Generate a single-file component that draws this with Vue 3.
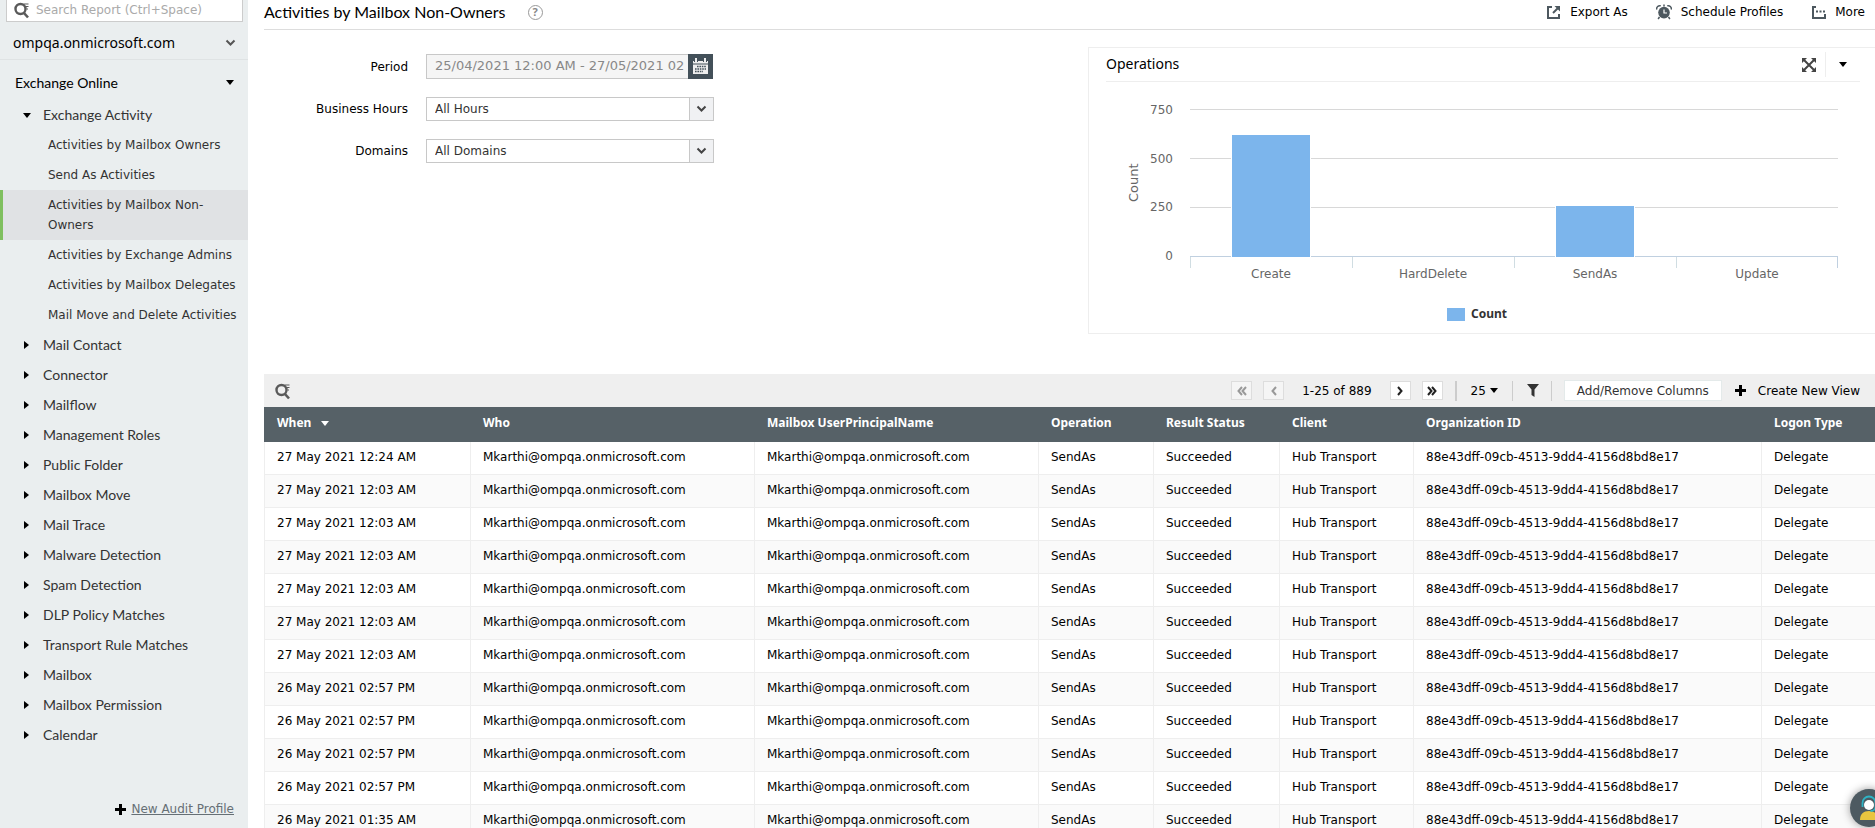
<script setup>
import { ref } from 'vue'

const reports = [
  'Activities by Mailbox Owners',
  'Send As Activities',
  'Activities by Mailbox Non-Owners',
  'Activities by Exchange Admins',
  'Activities by Mailbox Delegates',
  'Mail Move and Delete Activities'
]
const activeReport = 'Activities by Mailbox Non-Owners'

const groups = [
  'Mail Contact', 'Connector', 'Mailflow', 'Management Roles', 'Public Folder',
  'Mailbox Move', 'Mail Trace', 'Malware Detection', 'Spam Detection',
  'DLP Policy Matches', 'Transport Rule Matches', 'Mailbox',
  'Mailbox Permission', 'Calendar'
]

const period = ref('25/04/2021 12:00 AM - 27/05/2021 02')

const maxCount = 750
const yTicks = [750, 500, 250, 0]
const bars = [
  { name: 'Create', count: 618 },
  { name: 'HardDelete', count: 0 },
  { name: 'SendAs', count: 256 },
  { name: 'Update', count: 0 }
]

const columns = ['Who', 'Mailbox UserPrincipalName', 'Operation', 'Result Status', 'Client', 'Organization ID', 'Logon Type']
const times = [
  '27 May 2021 12:24 AM',
  ...Array(6).fill('27 May 2021 12:03 AM'),
  ...Array(4).fill('26 May 2021 02:57 PM'),
  '26 May 2021 01:35 AM'
]
const user = 'Mkarthi@ompqa.onmicrosoft.com'
const values = [user, user, 'SendAs', 'Succeeded', 'Hub Transport', '88e43dff-09cb-4513-9dd4-4156d8bd8e17', 'Delegate']
</script>

<template>
  <div class="page">
    <aside class="sidebar">
      <label class="search">
        <svg width="18" height="18" viewBox="0 0 18 18" fill="none" stroke="#5a5a5a">
          <circle cx="7.500" cy="8" r="5" stroke-width="2.400" />
          <path d="M11 12l4 4.500" stroke-width="2.600" />
          <path d="M10.500 3h5M12.500 5.500h3M13.500 8h1.500" stroke-width="1.200" />
        </svg>
        <input type="text" placeholder="Search Report (Ctrl+Space)" aria-label="Search Report" />
      </label>
      <button class="tenant">
        <span>ompqa.onmicrosoft.com</span>
        <svg width="11" height="8" viewBox="0 0 11 8"><path d="M1.500 1.500l4 4 4-4" fill="none" stroke="#555" stroke-width="2" /></svg>
      </button>
      <nav>
        <button class="section">
          <span>Exchange Online</span><i class="caret down"></i>
        </button>
        <button class="group open"><i class="caret down"></i><span>Exchange Activity</span></button>
        <a v-for="r in reports" :key="r" href="#" class="report" :class="{ active: r === activeReport }">{{ r }}</a>
        <button v-for="g in groups" :key="g" class="group"><i class="caret right"></i><span>{{ g }}</span></button>
      </nav>
      <div class="new-profile">
        <svg width="11" height="11" viewBox="0 0 11 11"><path d="M4 0h3v4h4v3H7v4H4V7H0V4h4z" /></svg>
        <a href="#">New Audit Profile</a>
      </div>
    </aside>

    <main class="main">
      <header class="top">
        <h1>Activities by Mailbox Non-Owners</h1>
        <button class="help" aria-label="Help">?</button>
        <div class="actions">
          <button>
            <svg width="15" height="15" viewBox="0 0 15 15" fill="none" stroke="#4d585f" stroke-width="2"><path d="M6 2H2v11h11V9" /><path d="M7 8l5-5" /><path d="M8.500 1H14v5.500z" fill="#4d585f" stroke="none" /></svg>
            Export As
          </button>
          <button>
            <svg width="16" height="16" viewBox="0 0 16 16"><circle cx="8" cy="8.600" r="5.800" fill="#4d585f" /><path d="M3.500 13l-1.400 2M12.500 13l1.400 2M.8 5.500a3 3 0 0 1 4-3.600M15.200 5.500a3 3 0 0 0-4-3.600M8 .5v2" fill="none" stroke="#4d585f" stroke-width="1.500" /><path d="M8 5.500V9h3" fill="none" stroke="#fff" stroke-width="1.200" /></svg>
            Schedule Profiles
          </button>
          <button>
            <svg width="15" height="15" viewBox="0 0 15 15" fill="none" stroke="#4d585f"><path d="M5 2H2v11h12V9" stroke-width="2" /><path d="M5 6.500h10" stroke-width="2" stroke-dasharray="2 1.500" /></svg>
            More
          </button>
        </div>
      </header>

      <section class="summary">
        <form class="filters">
          <label for="period">Period</label>
          <div class="period">
            <input id="period" v-model="period" type="text" readonly />
            <button type="button" aria-label="Pick dates">
              <svg width="17" height="17" viewBox="0 0 17 17"><path d="M1 3h15v13H1z" fill="#eee" /><path d="M1 6h15" stroke="#435059" /><path d="M4 0v4M13 0v4" stroke="#435059" stroke-width="4" /><path d="M4 0v4M13 0v4" stroke="#eee" stroke-width="2" /><path d="M5 8.500h9M3 11h11M3 13.500h8" stroke="#435059" stroke-width="1.500" stroke-dasharray="1.600 .8" /></svg>
            </button>
          </div>
          <label for="hours">Business Hours</label>
          <div class="drop">
            <select id="hours"><option>All Hours</option></select>
            <span><svg width="11" height="8" viewBox="0 0 11 8"><path d="M1.500 1.500l4 4 4-4" fill="none" stroke="#444" stroke-width="2" /></svg></span>
          </div>
          <label for="domains">Domains</label>
          <div class="drop">
            <select id="domains"><option>All Domains</option></select>
            <span><svg width="11" height="8" viewBox="0 0 11 8"><path d="M1.500 1.500l4 4 4-4" fill="none" stroke="#444" stroke-width="2" /></svg></span>
          </div>
        </form>

        <section class="card">
          <div class="card-head">
            <h2>Operations</h2>
            <button class="expand" aria-label="Expand">
              <svg width="14" height="14" viewBox="0 0 14 14" fill="#444"><path d="M2 2l10 10M12 2L2 12" stroke="#444" stroke-width="2" /><path d="M0 0h5L0 5zM14 0v5L9 0zM0 14V9l5 5zM14 14H9l5-5z" /></svg>
            </button>
            <button class="card-menu" aria-label="Chart menu"><i class="caret down"></i></button>
          </div>
          <div class="chart">
            <div class="axis-title">Count</div>
            <div class="y-axis"><span v-for="t in yTicks" :key="t">{{ t }}</span></div>
            <div class="plot">
              <div class="lines"><i></i><i></i><i></i></div>
              <div class="bars">
                <div v-for="b in bars" :key="b.name">
                  <i v-if="b.count" :style="{ height: (b.count / maxCount) * 100 + '%' }"></i>
                </div>
              </div>
            </div>
            <div class="x-axis"><span v-for="b in bars" :key="b.name">{{ b.name }}</span></div>
            <div class="legend"><i></i>Count</div>
          </div>
        </section>
      </section>

      <section class="results">
        <div class="toolbar">
          <button class="find" aria-label="Search">
            <svg width="18" height="18" viewBox="0 0 18 18" fill="none" stroke="#5a5a5a">
              <circle cx="7.500" cy="8" r="5" stroke-width="2.400" />
              <path d="M11 12l4 4.500" stroke-width="2.600" />
              <path d="M10.500 3h5M12.500 5.500h3M13.500 8h1.500" stroke-width="1.200" />
            </svg>
          </button>
          <button class="pg off" aria-label="First page"><svg width="10" height="10" viewBox="0 0 10 10"><path d="M5 1L1.500 5 5 9M9 1L5.500 5 9 9" /></svg></button>
          <button class="pg off" aria-label="Previous page"><svg width="10" height="10" viewBox="0 0 10 10"><path d="M7 1L3.500 5 7 9" /></svg></button>
          <span class="range">1-25 of 889</span>
          <button class="pg" aria-label="Next page"><svg width="10" height="10" viewBox="0 0 10 10"><path d="M3 1l3.500 4L3 9" /></svg></button>
          <button class="pg" aria-label="Last page"><svg width="10" height="10" viewBox="0 0 10 10"><path d="M1 1l3.500 4L1 9M5 1l3.500 4L5 9" /></svg></button>
          <i class="rule wide"></i>
          <button class="size">25<i class="caret down"></i></button>
          <i class="rule"></i>
          <button class="funnel" aria-label="Filter"><svg width="12" height="13" viewBox="0 0 12 13"><path d="M0 0h12L7.500 5.500V13L4.500 11V5.500z" fill="#333" /></svg></button>
          <i class="rule"></i>
          <button class="cols">Add/Remove Columns</button>
          <button class="create"><svg width="11" height="11" viewBox="0 0 11 11"><path d="M4 0h3v4h4v3H7v4H4V7H0V4h4z" /></svg>Create New View</button>
        </div>
        <table>
          <colgroup><col class="c1" /><col class="c2" /><col class="c2" /><col class="c3" /><col class="c4" /><col class="c5" /><col class="c6" /><col class="c7" /></colgroup>
          <thead>
            <tr>
              <th>When<i class="caret down"></i></th>
              <th v-for="c in columns" :key="c">{{ c }}</th>
            </tr>
          </thead>
          <tbody>
            <tr v-for="(t, n) in times" :key="n">
              <td>{{ t }}</td>
              <td v-for="(v, k) in values" :key="k">{{ v }}</td>
            </tr>
          </tbody>
        </table>
      </section>
    </main>

    <button class="support" aria-label="Support">
      <svg width="38" height="38" viewBox="0 0 38 38">
        <path d="M10 31c0-6 3.500-9 9-9s9 3 9 9z" fill="#e9c53f" />
        <circle cx="19" cy="16" r="5" fill="#fff" />
        <path d="M12.500 18v-4a6.500 6.500 0 0 1 13 0v4c0 2-2 4-5 4" fill="none" stroke="#2fb3c4" stroke-width="1.800" />
      </svg>
    </button>
  </div>
</template>

<style>
html, body { margin: 0; overflow: hidden; }
</style>

<style scoped>
* { box-sizing: border-box; }
.page {
  display: flex;
  height: 100vh;
  overflow: hidden;
  background: #fff;
  color: #000;
  font: 12px/20px "DejaVu Sans", sans-serif;
}
button {
  margin: 0;
  padding: 0;
  border: 0;
  background: none;
  color: inherit;
  font: inherit;
  text-align: left;
}
svg { flex: none; display: block; }
input, select { font: inherit; outline: 0; }

.caret { flex: none; display: inline-block; width: 0; height: 0; border: 4px solid transparent; }
.caret.down { border-top: 5px solid; border-bottom: 0; }
.caret.right { border-left: 5px solid #000; border-right: 0; }

.sidebar {
  flex: none;
  display: flex;
  flex-direction: column;
  width: 248px;
  background: #eaeeef;
  color: #333;
}
.search {
  flex: none;
  display: flex;
  align-items: center;
  gap: 5px;
  height: 22px;
  margin: 0 5px 0 6px;
  padding: 0 6px 2px;
  border: 1px solid #ccc;
  border-top: 0;
  background: #fff;
}
.search input { flex: 1; min-width: 0; padding: 0; border: 0; background: none; height: 18px; }
.search input::placeholder { color: #aaa; opacity: 1; }
.tenant {
  flex: none;
  display: flex;
  align-items: center;
  justify-content: space-between;
  height: 38px;
  padding: 4px 12px 0 13px;
  border-bottom: 1px solid #dfe3e4;
  color: #000;
  font: 14px/20px "Noto Sans", sans-serif;
}
nav { display: flex; flex-direction: column; padding-top: 5px; }
.section {
  display: flex;
  align-items: center;
  justify-content: space-between;
  height: 35px;
  padding: 0 14px 0 15px;
  color: #000;
  font: 14px/20px Lato, sans-serif;
}
.group {
  display: flex;
  align-items: center;
  gap: 14px;
  height: 30px;
  padding-left: 24px;
  font: 14px/20px Lato, sans-serif;
}
.group .caret { color: #000; }
.group.open { gap: 12px; padding-left: 23px; }
.report {
  padding: 5px 0 5px 45px;
  border-left: 3px solid transparent;
  color: #333;
  text-decoration: none;
}
.report.active { background: #e0e2e4; border-color: #7fbf5f; }
.new-profile {
  display: flex;
  align-items: center;
  justify-content: flex-end;
  gap: 5px;
  margin: auto 14px 9px 0;
  color: #000;
}
.new-profile a { color: #666f75; }

.main { flex: 1; min-width: 0; padding-left: 16px; }
.top { display: flex; align-items: center; height: 30px; padding-bottom: 5px; border-bottom: 1px solid #ddd; }
h1 { margin: 0; font: 16px/24px Lato, sans-serif; }
.help {
  width: 15px;
  height: 15px;
  margin-left: 22px;
  border: 1px solid #999;
  border-radius: 50%;
  color: #888;
  font: bold 11px/12px "Noto Sans", sans-serif;
  text-align: center;
}
.actions { display: flex; gap: 28px; margin-left: auto; padding-right: 10px; }
.actions button { display: flex; align-items: center; gap: 9px; }

.summary { display: grid; grid-template-columns: minmax(0, 824fr) minmax(0, 787fr); margin-top: 17px; }
.filters {
  display: grid;
  grid-template-columns: 144px 288px;
  grid-template-rows: 25px 24px 24px;
  row-gap: 18px;
  column-gap: 18px;
  align-content: start;
  align-items: center;
  padding-top: 7px;
}
.filters > label { text-align: right; }
.period { display: flex; height: 25px; width: 287px; }
.period input { flex: 1; min-width: 0; padding: 0 4px 2px 8px; border: 1px solid #c8c8c8; border-right: 0; background: #f5f5f5; color: #888; font-size: 13px; }
.period button { display: grid; place-items: center; width: 25px; background: #435059; }
.drop { display: grid; grid-template-columns: 1fr 24px; height: 24px; border: 1px solid #c8c8c8; }
.drop select { grid-area: 1 / 1 / 2 / 3; appearance: none; border: 0; padding: 0 8px; background: #fff; color: #333; }
.drop span { grid-area: 1 / 2; display: grid; place-items: center; border-left: 1px solid #c8c8c8; background: #f0f1f3; pointer-events: none; }

.card { height: 287px; padding: 0 15px 0 17px; border: 1px solid #eee; border-right: 0; }
.card-head { display: flex; align-items: center; height: 34px; border-bottom: 1px solid #eee; }
h2 { flex: 1; margin: 0; padding-bottom: 2px; font: 14px/20px "Noto Sans", sans-serif; }
.card-menu { display: grid; place-items: center; width: 35px; height: 25px; margin-left: 9px; border-left: 1px solid #eee; }
.chart {
  display: grid;
  grid-template-columns: 38px 29px 1fr;
  grid-template-rows: 148px 11px 26px;
  padding: 27px 22px 0 0;
  color: #666;
}
.axis-title { writing-mode: vertical-rl; transform: rotate(180deg); text-align: center; justify-self: end; font-size: 13px; }
.y-axis { display: flex; flex-direction: column; justify-content: space-between; margin: -9px 0 -9px; text-align: right; color: #666; }
.plot { display: grid; margin-left: 17px; }
.lines, .bars { grid-area: 1 / 1; display: grid; }
.lines { grid-template-rows: repeat(3, 1fr); border-bottom: 1px solid #c0d0e0; }
.lines i { border-top: 1px solid #d8d8d8; }
.bars { grid-template-columns: repeat(4, 1fr); height: 148px; }
.bars div { display: flex; align-items: flex-end; justify-content: center; height: 148px; }
.bars i { width: 48%; background: #7cb5ec; box-shadow: 0 0 0 1px #fff; }
.x-axis { grid-column: 3; grid-row: 2 / 4; display: grid; grid-template-columns: repeat(4, 1fr); margin-left: 17px; text-align: center; background: linear-gradient(#c0d0e0, #c0d0e0) right top / 1px 11px no-repeat; }
.x-axis span { padding-top: 7px; background: linear-gradient(#d0dde2, #d0dde2) left top / 1px 11px no-repeat; }
.legend { grid-column: 1 / 4; display: flex; align-items: center; justify-content: center; gap: 6px; padding: 10px 0 0 10px; color: #333; font: bold 12px/20px "Noto Sans", sans-serif; }
.legend i { width: 18px; height: 13px; background: #7cb5ec; }

.results { margin-top: 40px; }
.toolbar { display: flex; align-items: center; height: 33px; padding: 0 15px 0 10px; background: #efefef; }
.find { margin-right: auto; }
.pg { display: grid; place-items: center; width: 21px; height: 19px; margin-right: 11px; border: 1px solid #ddd; background: #fff; }
.pg svg { fill: none; stroke: #222; stroke-width: 2; }
.pg.off { background: #f5f5f5; }
.pg.off svg { stroke: #999; }
.range { margin: 0 18px 0 7px; }
.rule { width: 1px; height: 20px; background: #ccc; }
.rule.wide { width: 2px; margin-left: 1px; }
.size { display: flex; align-items: center; gap: 4px; margin: 0 14px; }
.funnel { margin: 0 12px 0 14px; }
.cols { height: 21px; margin: 0 13px 0 12px; padding: 0 12px; border: 1px solid #e4eaea; background: #fff; color: #333; line-height: 18px; }
.create { display: flex; align-items: center; gap: 12px; }

table { width: 100%; border-collapse: separate; border-spacing: 0; table-layout: fixed; }
.c1 { width: 206px; }
.c2 { width: 284px; }
.c3 { width: 115px; }
.c4 { width: 126px; }
.c5 { width: 134px; }
.c6 { width: 348px; }
.c7 { width: auto; }
th, td { padding: 0 0 2px 12px; text-align: left; white-space: nowrap; }
th { height: 35px; padding: 0 0 3px 13px; background: #566167; color: #fff; font: bold 12px/20px "Noto Sans", sans-serif; }
th .caret { margin-left: 10px; vertical-align: 1px; }
td { height: 33px; border-left: 1px solid #eee; border-bottom: 1px solid #eee; }
tbody tr:nth-child(even) td { background: #fafafa; }

.support {
  position: fixed;
  right: -13px;
  bottom: 1px;
  width: 38px;
  height: 38px;
  border-radius: 50%;
  background: #4d5a61;
  box-shadow: 0 0 8px #999;
}
</style>
